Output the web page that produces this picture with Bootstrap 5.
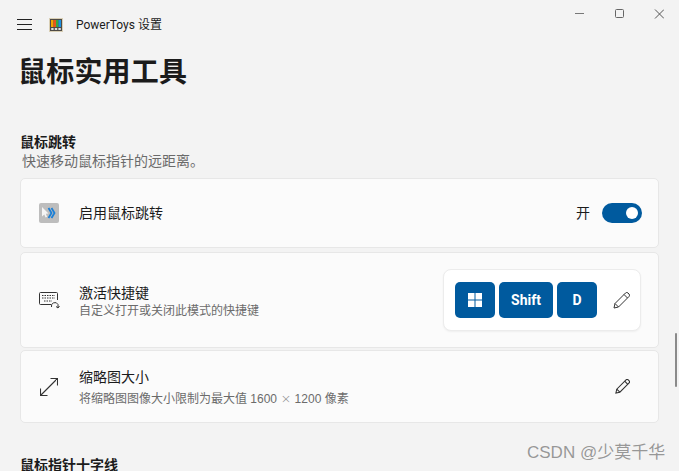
<!DOCTYPE html>
<html lang="zh-CN">
<head>
<meta charset="utf-8">
<title>PowerToys 设置</title>
<link href="https://cdn.jsdelivr.net/npm/bootstrap@5.3.0/dist/css/bootstrap.min.css" rel="stylesheet">
<style>
html,body{height:471px;overflow:hidden}
body{background:#f3f3f3;color:#1b1b1b;font-family:"Liberation Sans","Noto Sans CJK SC",sans-serif;position:relative}
.shell-top{height:49px;padding-left:17px}
.app-name{font-size:12px;margin-left:13px;font-family:Roboto,"Noto Sans CJK SC",sans-serif}
.app-logo{margin-left:17px}
.win-ctrls{position:absolute;top:0;right:0;height:28px}
.win-ctrls svg{display:block}
.win-btn{width:40px;height:28px;display:flex;align-items:center;justify-content:center}
.page-title{font-size:28px;font-weight:700;line-height:44px;margin:2px 0 0 18px;height:44px;letter-spacing:.2px}
.sect-head{font-size:14px;font-weight:700;line-height:18px;margin:0 0 0 20px;padding-top:38px}
.sect-head.next-sect{padding-top:33px}
.sect-sub{font-size:14px;line-height:18px;color:#6a6a6a;margin:1px 0 8px 22px}
.set-card{background:#fbfbfb;border:1px solid #e7e7e7;border-radius:5px;margin-left:20px;width:639px;padding-left:18px;padding-right:16px}
.h-one{height:70px;margin-bottom:4px}
.h-two{height:96px;margin-bottom:2px}
.h-three{height:73px}
.ico-box{width:21px;flex:none;margin-right:19px}
.ico-box svg{display:block}
.ico-arrows{margin-left:1px}
.row-title{font-size:14px;line-height:18px}
.row-desc{font-size:12px;line-height:18px;color:#6b6b6b}
.nudge-two{padding-top:4px}
.nudge-three{padding-top:2px}
.times{font-family:"DejaVu Sans",sans-serif;font-weight:200;color:#888;font-size:13px}
.sw-label{font-size:14px;margin-right:12px}
.sw-track{width:40px;height:20px;background:#005a9e;border-radius:10px;padding-right:4px}
.sw-knob{width:12px;height:12px;background:#fff;border-radius:50%}
.key-panel{background:#fff;border:1px solid #ececec;border-radius:8px;height:62px;padding:0 10px 0 11px;margin-right:1px;box-shadow:0 1px 2px rgba(0,0,0,.05)}
.key-cap{height:36px;background:#005a9e;color:#fff;border-radius:5px;font-size:14px;font-weight:700;display:flex;align-items:center;justify-content:center;font-family:Roboto,sans-serif}
.k-sq{width:40px}
.k-wide{width:54px}
.key-row{gap:4px}
.pen-wrap{margin-left:16px}
.pen-solo{margin-right:12px}
.scroll-thumb{position:absolute;left:675px;top:333px;width:2px;height:54px;background:#8a8a8a;border-radius:1px}
.wm{position:absolute;left:527px;top:442px;font-size:17px;line-height:22px;color:rgba(110,110,110,.7);white-space:nowrap}
</style>
</head>
<body>
<div class="shell-top d-flex align-items-center">
  <svg width="15" height="11" viewBox="0 0 15 11" fill="none" stroke="#222" stroke-width="1"><path d="M0 .5h15M0 5.500h15M0 10.500h15"/></svg>
  <svg class="app-logo" width="14" height="14" viewBox="0 0 14 14"><rect x=".5" y=".5" width="13" height="13" fill="#4d4a45" stroke="#d9cfb5"/><rect x="2" y="2" width="2.500" height="7" fill="#f2a500"/><rect x="4.500" y="2" width="2.500" height="7" fill="#e8541c"/><rect x="7" y="2" width="2.500" height="7" fill="#3aa83a"/><rect x="9.500" y="2" width="2.500" height="7" fill="#1d8fe0"/><rect x="2.200" y="10" width="2.400" height="2" fill="#ddd"/><rect x="5.800" y="10" width="2.400" height="2" fill="#ddd"/><rect x="9.400" y="10" width="2.400" height="2" fill="#ddd"/></svg>
  <span class="app-name">PowerToys 设置</span>
</div>
<div class="win-ctrls d-flex">
  <div class="win-btn"><svg width="10" height="10" viewBox="0 0 10 10" stroke="#777" fill="none"><path d="M1 4.500h9"/></svg></div>
  <div class="win-btn"><svg width="10" height="10" viewBox="0 0 10 10" stroke="#666" fill="none"><rect x="1.500" y=".5" width="8" height="8" rx="1"/></svg></div>
  <div class="win-btn"><svg width="10" height="10" viewBox="0 0 10 10" stroke="#555" fill="none"><path d="M1 .5l9 9M10 .5l-9 9"/></svg></div>
</div>
<h1 class="page-title">鼠标实用工具</h1>
<h2 class="sect-head">鼠标跳转</h2>
<p class="sect-sub">快速移动鼠标指针的远距离。</p>

<div class="set-card h-one d-flex align-items-center">
  <div class="ico-box">
    <svg width="20" height="20" viewBox="0 0 20 20"><rect width="20" height="20" rx="2" fill="#bdbdbd"/><path d="M3 4l6.500 6.500-2.700.3 1.300 3-1.500.7-1.300-3-2.300 2z" fill="#f5f5f5"/><path d="M9.500 5l3 5-3 5M12.500 5l3 5-3 5" fill="none" stroke="#1b7fd6" stroke-width="1.800"/></svg>
  </div>
  <div class="row-title flex-grow-1">启用鼠标跳转</div>
  <span class="sw-label">开</span>
  <div class="sw-track d-flex align-items-center justify-content-end"><div class="sw-knob"></div></div>
</div>

<div class="set-card h-two d-flex align-items-center">
  <div class="ico-box">
    <svg width="21" height="18" viewBox="0 0 21 18" fill="none" stroke="#333"><path d="M12 13.500H1.500a1 1 0 0 1-1-1V2.500a1 1 0 0 1 1-1h16a1 1 0 0 1 1 1V9"/><path d="M3 4.500h13M3 7h13M5 10h8" stroke-dasharray="1.500 1"/><path d="M12.500 16a3.500 3.500 0 0 1 6.500-2.500v3"/><path d="M17 15.500l2 1.500 1.500-2"/></svg>
  </div>
  <div class="flex-grow-1 nudge-two">
    <div class="row-title">激活快捷键</div>
    <div class="row-desc">自定义打开或关闭此模式的快捷键</div>
  </div>
  <div class="key-panel d-flex align-items-center">
    <div class="d-flex key-row">
      <div class="key-cap k-sq"><svg width="14" height="14" viewBox="0 0 14 14" fill="#fff"><rect width="6.500" height="6.500"/><rect x="7.500" width="6.500" height="6.500"/><rect y="7.500" width="6.500" height="6.500"/><rect x="7.500" y="7.500" width="6.500" height="6.500"/></svg></div>
      <div class="key-cap k-wide">Shift</div>
      <div class="key-cap k-sq">D</div>
    </div>
    <svg class="pen-wrap" width="17" height="17" viewBox="0 0 17 17" fill="none" stroke="#333"><path d="M1 16l1-4.500L12.500 1a1.800 1.800 0 0 1 2.500 0l1 1a1.800 1.800 0 0 1 0 2.500L5.500 15z"/><path d="M2 11.500L5.500 15M11 2.500l3.500 3.500"/></svg>
  </div>
</div>

<div class="set-card h-three d-flex align-items-center">
  <div class="ico-box">
    <svg class="ico-arrows" width="18" height="18" viewBox="0 0 18 18" fill="none" stroke="#333" stroke-width="1.100"><path d="M.5 17.500l17-17M10.500.5h7v7M.5 10.500v7h7"/></svg>
  </div>
  <div class="flex-grow-1 nudge-three">
    <div class="row-title">缩略图大小</div>
    <div class="row-desc mt-1">将缩略图图像大小限制为最大值 1600 <span class="times">×</span> 1200 像素</div>
  </div>
  <svg class="pen-solo" width="15" height="15" viewBox="0 0 17 17" fill="none" stroke="#333" stroke-width="1.200"><path d="M1 16l1-4.500L12.500 1a1.800 1.800 0 0 1 2.500 0l1 1a1.800 1.800 0 0 1 0 2.500L5.500 15z"/><path d="M2 11.500L5.500 15M11 2.500l3.500 3.500"/></svg>
</div>

<h2 class="sect-head next-sect">鼠标指针十字线</h2>
<div class="scroll-thumb"></div>
<div class="wm">CSDN @少莫千华</div>
<script src="https://cdn.jsdelivr.net/npm/bootstrap@5.3.0/dist/js/bootstrap.bundle.min.js"></script>
</body>
</html>
